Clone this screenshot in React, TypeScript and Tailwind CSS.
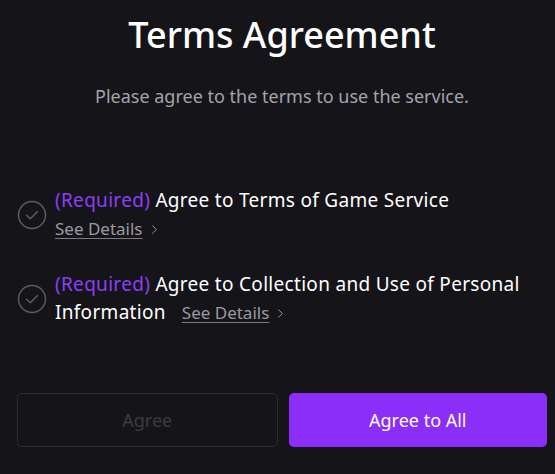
import { ChevronRight } from 'lucide-react'

function CheckCircle() {
  return (
    <svg width="30" height="30" viewBox="0 0 30 30" fill="none" className="shrink-0">
      <circle cx="15" cy="15" r="13.5" stroke="#5b5b61" strokeWidth="1.5" />
      <path d="M9.5 15.2l3.8 3.6 7.2-7.3" stroke="#5b5b61" strokeWidth="1.5" strokeLinecap="round" strokeLinejoin="round" />
    </svg>
  )
}

function SeeDetails() {
  return (
    <span className="inline-flex items-center gap-[4px] text-[17px] tracking-normal text-[#9a9aa2]">
      <span className="underline underline-offset-[3px] decoration-[#7a7a80]">See Details</span>
      <ChevronRight className="w-[15px] h-[15px] text-[#9a9aa2]" strokeWidth={1.6} />
    </span>
  )
}

export default function App() {
  return (
    <div className="w-full h-[474px] bg-[#151419] pl-[17px] pr-[8px] font-['Noto_Sans',sans-serif] overflow-hidden">
      <h1 className="pt-[12px] text-center text-[36px] leading-[46px] font-medium text-white">
        Terms Agreement
      </h1>
      <p className="mt-[25px] text-center text-[18px] leading-[26px] text-[#a3a3ab]">
        Please agree to the terms to use the service.
      </p>

      <div className="mt-[77px] flex flex-col gap-[27px]">
        <div className="flex items-center gap-[8px]">
          <CheckCircle />
          <div className="text-[19px] tracking-[0.3px] leading-[28px] text-white">
            <p>
              <span className="text-[#8b3ff7]">(Required)</span> Agree to Terms of Game Service
            </p>
            <p className="leading-[28px]">
              <SeeDetails />
            </p>
          </div>
        </div>
        <div className="flex items-center gap-[8px]">
          <CheckCircle />
          <div className="text-[19px] tracking-[0.3px] leading-[28px] text-white">
            <p>
              <span className="text-[#8b3ff7]">(Required)</span> Agree to Collection and Use of Personal
            </p>
            <p>
              Information
              <span className="ml-[16px]">
                <SeeDetails />
              </span>
            </p>
          </div>
        </div>
      </div>

      <div className="mt-[66px] flex gap-[11px]">
        <button className="flex-1 h-[54px] rounded-[5px] border border-[#2a2a30] text-[18px] text-[#3c3c42]">
          Agree
        </button>
        <button className="flex-1 h-[54px] rounded-[5px] bg-[#8a2ef8] text-[18px] text-white">
          Agree to All
        </button>
      </div>
    </div>
  )
}
